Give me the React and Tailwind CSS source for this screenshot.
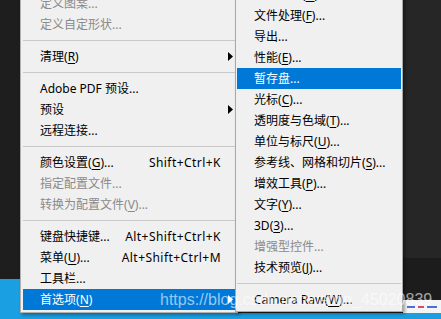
import React from 'react'

const leftItems = [
  { label: '定义图案...', disabled: true },
  { label: '定义自定形状...', disabled: true },
  { sep: true },
  { label: '清理', mn: 'R', arrow: true },
  { sep: true },
  { label: 'Adobe PDF 预设...' },
  { label: '预设', arrow: true },
  { label: '远程连接...' },
  { sep: true },
  { label: '颜色设置', mn: 'G', tail: '...', shortcut: 'Shift+Ctrl+K' },
  { label: '指定配置文件...', disabled: true },
  { label: '转换为配置文件', mn: 'V', tail: '...', disabled: true },
  { sep: true },
  { label: '键盘快捷键...', shortcut: 'Alt+Shift+Ctrl+K' },
  { label: '菜单', mn: 'U', tail: '...', shortcut: 'Alt+Shift+Ctrl+M' },
  { label: '工具栏...' },
  { label: '首选项', mn: 'N', arrow: true, active: true },
]

const rightItems = [
  { label: '历史记录', mn: 'H', tail: '...' },
  { label: '文件处理', mn: 'F', tail: '...' },
  { label: '导出...' },
  { label: '性能', mn: 'E', tail: '...' },
  { label: '暂存盘...', active: true },
  { label: '光标', mn: 'C', tail: '...' },
  { label: '透明度与色域', mn: 'T', tail: '...' },
  { label: '单位与标尺', mn: 'U', tail: '...' },
  { label: '参考线、网格和切片', mn: 'S', tail: '...' },
  { label: '增效工具', mn: 'P', tail: '...' },
  { label: '文字', mn: 'Y', tail: '...' },
  { label: '3D', mn: '3', tail: '...' },
  { label: '增强型控件...', disabled: true },
  { label: '技术预览', mn: 'J', tail: '...' },
  { sep: true },
  { label: 'Camera Raw', mn: 'W', tail: '...' },
]

const Arrow = ({ white }) => (
  <svg width="5" height="9" viewBox="0 0 5 9" className="block">
    <polygon points="0,0 5,4.5 0,9" fill={white ? '#ffffff' : '#000000'} />
  </svg>
)

const Label = ({ item }) => (
  <span>
    {item.label}
    {item.mn && (
      <>
        (<span className="underline underline-offset-2">{item.mn}</span>)
      </>
    )}
    {item.tail}
  </span>
)

const Row = ({ item, withColumn }) => {
  if (item.sep) {
    return (
      <div className="h-[11px] flex items-center">
        <div className="h-px w-full bg-[#c8c8c8]" />
      </div>
    )
  }
  const color = item.active
    ? 'bg-[#0078d7] text-white'
    : item.disabled
    ? 'text-[#8a8a8a]'
    : 'text-black'
  return (
    <div className={`h-[21px] flex items-center pl-[17px] whitespace-nowrap ${color}`}>
      <div className="flex-1">
        <Label item={item} />
      </div>
      {withColumn && (
        <>
          {item.shortcut && <span className="tracking-[0.45px]">{item.shortcut}</span>}
          <div className="w-[14px] flex justify-end pr-[2px]">
            {item.arrow && <Arrow white={item.active} />}
          </div>
        </>
      )}
    </div>
  )
}

export default function App() {
  return (
    <div className="relative w-[441px] h-[319px] overflow-hidden bg-[#1a9fe3] font-['Noto_Sans','Noto_Sans_CJK_SC',sans-serif] text-[12px] leading-none">
      {/* desktop / window behind the menus */}
      <div className="flex h-full">
        <div className="w-[20px] flex flex-col">
          <div className="h-[279px] bg-[#1e1e1e]" />
        </div>
        <div className="flex-1 flex flex-col">
          <div className="h-[313px] bg-[#1e1e1e]" />
        </div>
        <div className="w-[38px] flex flex-col">
          <div className="h-[258px] bg-[#262626]" />
          <div className="h-[42px] bg-[#1c1c1c]" />
          <div className="h-[13px] bg-[#f4f4f4] flex items-center gap-[3px] pl-[4px]">
            <div className="w-[8px] h-[2px] bg-[#4a6fd8]" />
            <div className="w-[6px] h-[2px] bg-[#d84a6a]" />
            <div className="w-[10px] h-[2px] bg-[#4a6fd8]" />
          </div>
        </div>
      </div>

      {/* main menu */}
      <div className="absolute left-[20px] top-[-10px] w-[218px] bg-[#f0f0f0] border border-[#b0b0b0] p-[2px] shadow-[2px_2px_3px_rgba(0,0,0,0.35)]">
        {leftItems.map((item, i) => (
          <Row key={i} item={item} withColumn />
        ))}
      </div>

      {/* preferences submenu */}
      <div className="absolute left-[235px] top-[-18px] w-[168px] bg-[#f0f0f0] border border-[#a8a8a8] p-[1px] shadow-[2px_2px_3px_rgba(0,0,0,0.35)]">
        {rightItems.map((item, i) => (
          <Row key={i} item={item} />
        ))}
      </div>

      {/* watermark */}
      <div className="absolute left-[160px] top-[291px] font-['Liberation_Sans',Arial,sans-serif] text-[16px] leading-[18px] text-white/60 whitespace-nowrap">
        https://blog.csdn.net/weixin_45020839
      </div>
    </div>
  )
}
